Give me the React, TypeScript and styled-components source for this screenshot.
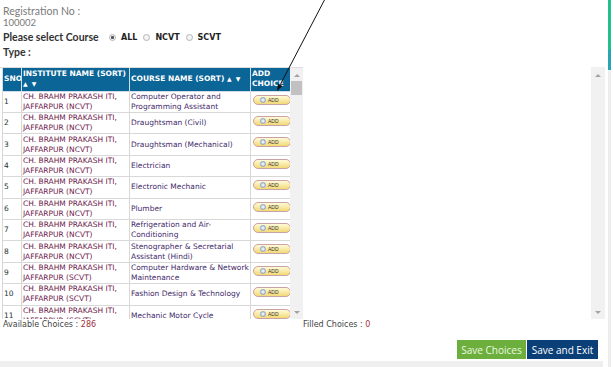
import React from 'react';
import styled, { createGlobalStyle } from 'styled-components';

const GlobalStyle = createGlobalStyle`
  html, body {
    margin: 0;
    padding: 0;
    background: #fff;
  }
  body {
    font-family: 'Open Sans', 'Liberation Sans', sans-serif;
    overflow: hidden;
  }
`;

const Page = styled.div`
  position: relative;
  display: flex;
  width: 613px;
  height: 367px;
  overflow: hidden;
`;

const Main = styled.div`
  width: 606px;
  display: flex;
  flex-direction: column;
`;

const Rail = styled.div`
  margin-left: 2px;
  width: 3px;
  background: linear-gradient(
    to bottom,
    #1fc28c 0,
    #1fc28c 50px,
    #27a6b8 50px,
    #27a6b8 70px,
    #ededed 70px
  );
`;

const Info = styled.div`
  height: 68px;
  box-sizing: border-box;
  padding: 5px 0 0 3px;
  font-family: Lato, 'Open Sans', sans-serif;
  color: #7a7a7a;
`;

const RegLabel = styled.div`
  font-size: 10.5px;
  line-height: 12px;
`;

const RegValue = styled.div`
  font-size: 9.5px;
  line-height: 12px;
`;

const CourseRow = styled.div`
  display: flex;
  align-items: flex-start;
  margin-top: 1px;
`;

const CourseLabel = styled.div`
  width: 106px;
  font-size: 10.5px;
  font-weight: bold;
  line-height: 15px;
  color: #333;
`;

const Options = styled.div`
  display: flex;
  align-items: center;
  gap: 6px;
  height: 15px;
`;

const Option = styled.label`
  display: flex;
  align-items: center;
  gap: 5px;
  font-family: 'DejaVu Sans', Verdana, sans-serif;
  font-weight: bold;
  font-size: 8px;
  color: #222;
`;

const Radio = styled.span<{ $checked?: boolean }>`
  width: 7px;
  height: 7px;
  box-sizing: border-box;
  border-radius: 50%;
  border: 1px solid #b4b4b4;
  background: ${(p) =>
    p.$checked
      ? 'radial-gradient(circle, #555 0, #555 1.3px, #f2f2f2 1.8px)'
      : '#f4f4f4'};
`;

const Panel = styled.div`
  display: flex;
  width: 605px;
  height: 252px;
`;

const TableArea = styled.div`
  width: 303px;
  display: flex;
  box-sizing: border-box;
  border-top: 1px solid #dedede;
  padding-left: 2px;
  overflow: hidden;
`;

const TableClip = styled.div`
  width: 288px;
  overflow: hidden;
`;

const Spacer = styled.div`
  flex: 1;
`;

const Scrollbar = styled.div<{ $w: number; $top: number }>`
  width: ${(p) => p.$w}px;
  display: flex;
  flex-direction: column;
  align-items: center;
  padding: ${(p) => p.$top}px 0 5px;
  box-sizing: border-box;
  background: #f1f1f1;
`;

const ArrowUp = styled.span`
  width: 0;
  height: 0;
  border-left: 3px solid transparent;
  border-right: 3px solid transparent;
  border-bottom: 3px solid #a3a3a3;
`;

const ArrowDown = styled.span`
  width: 0;
  height: 0;
  border-left: 3px solid transparent;
  border-right: 3px solid transparent;
  border-top: 3px solid #a3a3a3;
`;

const Thumb = styled.span`
  margin-top: 4px;
  width: 11px;
  height: 14px;
  background: #c1c1c1;
`;

const Track = styled.span`
  flex: 1;
`;

const Table = styled.table`
  width: 288px;
  border-collapse: collapse;
  table-layout: fixed;
  font-family: 'DejaVu Sans', Verdana, sans-serif;
  font-size: 7.5px;
`;

const HeadCell = styled.th<{ $w: number }>`
  width: ${(p) => p.$w}px;
  height: 23px;
  padding: 0 1px;
  box-sizing: border-box;
  background: #0b6597;
  color: #fff;
  font-weight: bold;
  text-align: left;
  line-height: 10px;
  vertical-align: middle;
  border: 1px solid #cfdde8;
  border-top: none;
  white-space: nowrap;
  overflow: hidden;
`;

const Sort = styled.span`
  font-size: 6px;
  letter-spacing: 1px;
`;

const Row = styled.tr`
  height: 21.4px;
`;

const Cell = styled.td<{ $tone?: 'sno' | 'inst' | 'course' }>`
  padding: 0 1px;
  border: 1px solid #d8d8d8;
  line-height: 10px;
  vertical-align: middle;
  color: ${(p) =>
    p.$tone === 'inst' ? '#6e1a4a' : p.$tone === 'course' ? '#3f2a6a' : '#233'};
  overflow: hidden;
`;

const AddCell = styled.td`
  padding: 3px 0 0 2px;
  border: 1px solid #d8d8d8;
  vertical-align: top;
`;

const AddButton = styled.span`
  display: flex;
  align-items: center;
  gap: 2px;
  width: 38px;
  height: 10px;
  box-sizing: border-box;
  padding-left: 6px;
  border: 1px solid #c9a2a6;
  border-radius: 6px;
  background: linear-gradient(#fffbd8, #f3d974);
  font-family: 'Liberation Sans', Arial, sans-serif;
  font-size: 5px;
  color: #333;
`;

const Counts = styled.div`
  display: flex;
  height: 10px;
  line-height: 10px;
  font-family: 'DejaVu Sans', Verdana, sans-serif;
  font-size: 8px;
  color: #444;
`;

const CountCell = styled.div<{ $w?: number }>`
  width: ${(p) => (p.$w ? `${p.$w}px` : 'auto')};
  padding-left: ${(p) => (p.$w ? 3 : 0)}px;
  box-sizing: border-box;
  padding-top: 1px;
`;

const Number = styled.span`
  color: #a0303a;
`;

const ButtonBar = styled.div`
  display: flex;
  justify-content: flex-end;
  gap: 1px;
  margin-top: 11px;
  padding-right: 8px;
`;

const ActionButton = styled.button<{ $variant: 'green' | 'navy'; $w: number }>`
  width: ${(p) => p.$w}px;
  height: 19px;
  padding: 0;
  border: none;
  font-family: 'Open Sans', 'Liberation Sans', sans-serif;
  font-size: 10px;
  color: ${(p) => (p.$variant === 'green' ? '#eef8e4' : '#fff')};
  background: ${(p) => (p.$variant === 'green' ? '#6caf3c' : '#0b3f78')};
`;

const BottomStrip = styled.div`
  margin-top: 2px;
  width: 603px;
  height: 6px;
  background: #efefef;
`;

const Overlay = styled.svg`
  position: absolute;
  left: 0;
  top: 0;
  pointer-events: none;
`;

const PlusIcon = () => (
  <svg width="6" height="6" viewBox="0 0 6 6">
    <circle cx="3" cy="3" r="2.7" fill="#a8bbd4" stroke="#8ea3c2" strokeWidth="0.5" />
    <path d="M3 1.3v3.4M1.3 3h3.4" stroke="#fff" strokeWidth="1" />
  </svg>
);

const INST = 'CH. BRAHM PRAKASH ITI,';

const rows = [
  { cat: 'NCVT', course: ['Computer Operator and', 'Programming Assistant'] },
  { cat: 'NCVT', course: ['Draughtsman (Civil)'] },
  { cat: 'NCVT', course: ['Draughtsman (Mechanical)'] },
  { cat: 'NCVT', course: ['Electrician'] },
  { cat: 'NCVT', course: ['Electronic Mechanic'] },
  { cat: 'NCVT', course: ['Plumber'] },
  { cat: 'NCVT', course: ['Refrigeration and Air-', 'Conditioning'] },
  { cat: 'NCVT', course: ['Stenographer & Secretarial', 'Assistant (Hindi)'] },
  { cat: 'SCVT', course: ['Computer Hardware & Network', 'Maintenance'] },
  { cat: 'SCVT', course: ['Fashion Design & Technology'] },
  { cat: 'SCVT', course: ['Mechanic Motor Cycle'] },
];

function App() {
  return (
    <Page>
      <GlobalStyle />
      <Main>
        <Info>
          <RegLabel>Registration No :</RegLabel>
          <RegValue>100002</RegValue>
          <CourseRow>
            <CourseLabel>Please select Course Type :</CourseLabel>
            <Options>
              <Option>
                <Radio $checked />
                ALL
              </Option>
              <Option>
                <Radio />
                NCVT
              </Option>
              <Option>
                <Radio />
                SCVT
              </Option>
            </Options>
          </CourseRow>
        </Info>

        <Panel>
          <TableArea>
            <TableClip>
              <Table>
                <thead>
                  <tr>
                    <HeadCell $w={19}>SNO</HeadCell>
                    <HeadCell $w={108}>
                      INSTITUTE NAME (SORT)
                      <br />
                      <Sort>▲ ▼</Sort>
                    </HeadCell>
                    <HeadCell $w={121}>
                      COURSE NAME (SORT) <Sort>▲ ▼</Sort>
                    </HeadCell>
                    <HeadCell $w={40}>
                      ADD
                      <br />
                      CHOICE
                    </HeadCell>
                  </tr>
                </thead>
                <tbody>
                  {rows.map((r, i) => (
                    <Row key={i}>
                      <Cell $tone="sno">{i + 1}</Cell>
                      <Cell $tone="inst">
                        {INST}
                        <br />
                        JAFFARPUR ({r.cat})
                      </Cell>
                      <Cell $tone="course">
                        {r.course[0]}
                        {r.course[1] && (
                          <>
                            <br />
                            {r.course[1]}
                          </>
                        )}
                      </Cell>
                      <AddCell>
                        <AddButton>
                          <PlusIcon />
                          ADD
                        </AddButton>
                      </AddCell>
                    </Row>
                  ))}
                </tbody>
              </Table>
            </TableClip>
            <Scrollbar $w={13} $top={6}>
              <ArrowUp />
              <Thumb />
              <Track />
              <ArrowDown />
            </Scrollbar>
          </TableArea>
          <Spacer />
          <Scrollbar $w={14} $top={7}>
            <ArrowUp />
            <Track />
            <ArrowDown />
          </Scrollbar>
        </Panel>

        <Counts>
          <CountCell $w={303}>
            Available Choices : <Number>286</Number>
          </CountCell>
          <CountCell>
            Filled Choices : <Number>0</Number>
          </CountCell>
        </Counts>

        <ButtonBar>
          <ActionButton $variant="green" $w={69}>
            Save Choices
          </ActionButton>
          <ActionButton $variant="navy" $w={71}>
            Save and Exit
          </ActionButton>
        </ButtonBar>
        <BottomStrip />
      </Main>
      <Rail />

      <Overlay width="613" height="367" viewBox="0 0 613 367">
        <line x1="325.5" y1="-2" x2="280.2" y2="84.8" stroke="#111" strokeWidth="1" />
        <polygon points="277,91 282.4,86 278,83.6" fill="#111" />
      </Overlay>
    </Page>
  );
}

export default App;
